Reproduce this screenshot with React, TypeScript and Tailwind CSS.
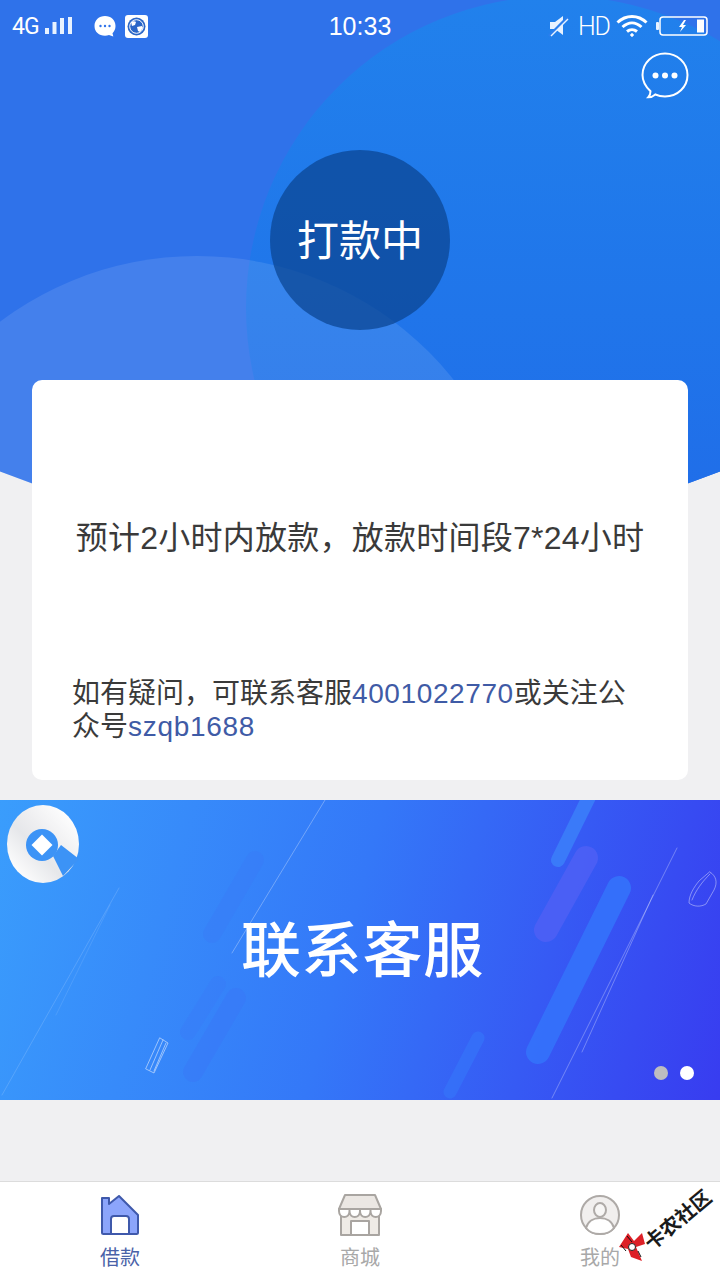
import React from 'react';

const cjk = "font-['Liberation_Sans','Noto_Sans_CJK_SC',sans-serif]";

function StatusBar() {
  return (
    <div className="relative grid grid-cols-3 items-center h-[52px] px-[12px] text-white">
      <div className="flex items-center">
        <span className="font-['Roboto',sans-serif] text-[23px] leading-none tracking-[-1px]">4G</span>
        <svg width="30" height="20" viewBox="0 0 30 20" className="ml-[6px]" fill="#e8f2ff">
          <rect x="0" y="12" width="4" height="6" />
          <rect x="7.500" y="6" width="4" height="12" />
          <rect x="15" y="2" width="4" height="16" />
          <rect x="23" y="1" width="4" height="17" />
        </svg>
        <svg width="24" height="26" viewBox="0 0 24 26" className="ml-[18px]">
          <path d="M12 3c6 0 10.500 4 10.500 10 0 3-1.200 5.500-3 7.200l.8 3.300-4.300-1.500c-1.300.5-2.600.7-4 .7C6 22.700 1.500 19 1.500 13S6 3 12 3z" fill="#fff" />
          <circle cx="7.500" cy="13" r="1.200" fill="#2f72ea" />
          <circle cx="12" cy="13" r="1.200" fill="#2f72ea" />
          <circle cx="16.500" cy="13" r="1.200" fill="#2f72ea" />
        </svg>
        <svg width="23" height="23" viewBox="0 0 23 23" className="ml-[8px]">
          <rect x="0" y="0" width="23" height="23" rx="3" fill="#fff" />
          <circle cx="11.500" cy="11.500" r="9" fill="#2a66c8" />
          <circle cx="11.500" cy="11.500" r="6.800" fill="none" stroke="#fff" strokeWidth="1" />
          <path d="M6 7c2-1 4-1 5 0l-1 3-3 1zM12 12l5-1 1 2-3 4-2-1z" fill="#fff" />
        </svg>
      </div>
      <div className="text-center font-['Liberation_Sans',sans-serif] text-[25px] font-normal leading-none">10:33</div>
      <div className="flex items-center justify-end">
        <svg width="22" height="22" viewBox="0 0 22 22">
          <path d="M2 7h5l8-6v19l-8-6H2z" fill="#e8f2ff" />
          <path d="M1 21L20 2" stroke="#2b7fee" strokeWidth="3" />
          <path d="M3 21L20 4" stroke="#e8f2ff" strokeWidth="1.500" />
        </svg>
        <span className="ml-[8px] font-['Roboto',sans-serif] text-[25px] font-light leading-none tracking-[-1px]">HD</span>
        <svg width="32" height="24" viewBox="0 0 32 24" className="ml-[6px]" fill="none" stroke="#fff" strokeWidth="3">
          <path d="M1.500 8.500C10 .5 22 .5 30.500 8.500" />
          <path d="M6.500 13c6-5.500 13-5.500 19 0" />
          <path d="M11 17.500c3-2.500 7-2.500 10 0" />
          <circle cx="16" cy="21" r="1.300" fill="#fff" strokeWidth="1" />
        </svg>
        <svg width="52" height="20" viewBox="0 0 52 20" className="ml-[8px]">
          <rect x="0" y="6" width="3" height="8" rx="1" fill="#e8f2ff" />
          <rect x="4" y="1" width="47" height="18" rx="3" fill="none" stroke="#fff" strokeWidth="1.500" />
          <rect x="41" y="3.500" width="7" height="13" fill="#fff" />
          <path d="M28 4l-5 7h3l-2 5 6-7h-3l3-5z" fill="#fff" />
        </svg>
      </div>
    </div>
  );
}

function ChatIcon() {
  return (
    <svg width="48" height="48" viewBox="0 0 48 48" fill="none">
      <path d="M24 1.500C36.500 1.500 46.500 11 46.500 23S36.500 44.500 24 44.500c-3.500 0-6.800-.7-9.700-2-2 1.800-4.500 2.800-7 2.800 1.500-1.600 2.200-3.700 2.200-6C5 35 1.500 29.500 1.500 23 1.500 11 11.500 1.500 24 1.500z" stroke="#fff" strokeWidth="2" />
      <circle cx="14.500" cy="23.500" r="3" fill="#fff" />
      <circle cx="24" cy="23.500" r="3" fill="#fff" />
      <circle cx="33.500" cy="23.500" r="3" fill="#fff" />
    </svg>
  );
}

function BannerArt() {
  return (
    <svg width="720" height="300" viewBox="0 800 720 300" fill="none" className="absolute inset-0" strokeLinecap="round">
      <path d="M255 860L212 934" stroke="#3a78f6" strokeOpacity="0.3" strokeWidth="18" />
      <path d="M218 984L188 1032" stroke="#3a72f6" strokeOpacity="0.25" strokeWidth="16" />
      <path d="M236 998L193 1072" stroke="#3a70f6" strokeOpacity="0.3" strokeWidth="20" />
      <path d="M590 795L558 860" stroke="#3b7dfa" strokeOpacity="0.9" strokeWidth="14" />
      <path d="M586 858L546 930" stroke="#4d5ff5" strokeOpacity="0.9" strokeWidth="24" />
      <path d="M619 888L538 1052" stroke="#3472fb" strokeOpacity="0.9" strokeWidth="24" />
      <path d="M478 1038L450 1092" stroke="#3570f8" strokeOpacity="0.9" strokeWidth="13" />
      <g stroke="#ffffff" strokeOpacity="0.3" strokeWidth="1">
        <path d="M325 800L232 953" />
        <path d="M677 848L552 1098" />
        <path d="M653 895L582 1052" />
        <path d="M119 888L2 1095" strokeOpacity="0.15" />
        <path d="M110 905L56 1015" strokeOpacity="0.1" />
      </g>
      {/* paper clip */}
      <g stroke="#ffffff" strokeOpacity="0.5" strokeWidth="1">
        <path d="M160 1038l8 5-14 30-8-4z" />
        <path d="M163 1040l-13 30M166 1043l-12 28" />
      </g>
      {/* feather */}
      <g stroke="#ffffff" strokeOpacity="0.4" strokeWidth="1">
        <path d="M710 872c6 4 8 10 4 18l-8 14c-5 3-12 3-17-1 0-8 5-16 10-22z" />
        <path d="M692 900c4-10 10-18 18-26" />
      </g>
    </svg>
  );
}

function BannerLogo() {
  return (
    <svg width="80" height="84" viewBox="0 0 80 84" className="absolute left-[4px] top-[2px]">
      <defs>
        <linearGradient id="lg" x1="0.1" y1="0.9" x2="0.9" y2="0.1">
          <stop offset="0" stopColor="#ffffff" />
          <stop offset="0.4" stopColor="#e6e7ea" />
          <stop offset="0.6" stopColor="#eeeef0" />
          <stop offset="1" stopColor="#ffffff" />
        </linearGradient>
      </defs>
      <ellipse cx="39" cy="42" rx="36" ry="39" fill="url(#lg)" />
      <path d="M49 54L59 74 75 57 57 43z" fill="#3c93f6" />
      <circle cx="38" cy="43" r="16" fill="#3c93f6" />
      <path d="M38 32.500l10.500 10.500-10.500 10.500-10.500-10.500z" fill="#fff" strokeLinejoin="round" />
    </svg>
  );
}

function HomeIcon() {
  return (
    <svg width="40" height="40" viewBox="0 0 40 40" strokeLinejoin="round">
      <path d="M2 17V3h7v6l10-8 19 19v17.500a1.500 1.500 0 0 1-1.500 1.500h-33A1.500 1.500 0 0 1 2 37.500z" fill="#8ca5fb" stroke="#3f59ab" strokeWidth="2" />
      <path d="M11 39V24a3 3 0 0 1 3-3h12a3 3 0 0 1 3 3v15z" fill="#fff" stroke="#3f59ab" strokeWidth="2" />
    </svg>
  );
}

function ShopIcon() {
  return (
    <svg width="44" height="42" viewBox="0 0 44 42" fill="none" stroke="#a9a5a1" strokeWidth="2" strokeLinejoin="round">
      <path d="M3 20v21h38V20" fill="#efebe6" />
      <path d="M13 41V27h18v14z" fill="#fff" />
      <path d="M7 1h30l6 14H1z" fill="#ebe7e3" />
      <path d="M1 15v2c0 8 10.500 8 10.500 0v-2 2c0 8 10.500 8 10.500 0v-2 2c0 8 10.500 8 10.500 0v-2 2c0 8 10.500 8 10.500 0v-2z" fill="#fff" />
    </svg>
  );
}

function UserIcon() {
  return (
    <svg width="40" height="40" viewBox="0 0 40 40" fill="none" stroke="#aeaaa7" strokeWidth="2">
      <circle cx="20" cy="20" r="19" fill="#f1efee" />
      <ellipse cx="20" cy="15" rx="6" ry="7" fill="#f7f6f5" />
      <path d="M6 33c2-7 8-10 14-10s12 3 14 10c-3 4-8 6-14 6s-11-2-14-6z" fill="#fff" />
    </svg>
  );
}

function Watermark() {
  return (
    <div className="absolute left-[618px] top-[1186px] w-[102px] h-[76px]">
      <svg width="30" height="32" viewBox="0 0 30 32" className="absolute left-0 bottom-0">
        <path d="M1 17L10 3l6 8 8-8 3 11-9 3 6 14-11-4-3-8z" fill="#dd2027" />
        <path d="M3 15l5 6M9 6l5 6M20 21l3 6" stroke="#111" strokeWidth="1" />
        <circle cx="14" cy="17" r="3.500" fill="#fff" stroke="#222" strokeWidth="1" />
      </svg>
      <span className={`absolute left-[20px] top-[24px] -rotate-[40deg] whitespace-nowrap text-[20px] font-bold leading-none text-[#1a1a1a] ${cjk}`}>
        卡农社区
      </span>
    </div>
  );
}

export default function App() {
  const tabs = [
    { label: '借款', icon: <HomeIcon />, color: 'text-[#4a62a8]' },
    { label: '商城', icon: <ShopIcon />, color: 'text-[#a8a8a8]' },
    { label: '我的', icon: <UserIcon />, color: 'text-[#a8a8a8]' },
  ];

  return (
    <div className={`relative flex flex-col w-[720px] h-[1280px] overflow-hidden bg-[#f0f0f2] ${cjk}`}>
      {/* background shapes */}
      <div className="absolute left-[-620px] top-[-1420px] w-[1960px] h-[1960px] rounded-full overflow-hidden bg-[#2f72ea]">
        <div className="absolute left-[866px] top-[1416px] w-[624px] h-[624px] rounded-full bg-gradient-to-b from-[#2181ec] to-[#2069e8]" />
        <div className="absolute left-[489px] top-[1676px] w-[656px] h-[656px] rounded-full bg-white/10" />
      </div>

      <div className="relative flex flex-col flex-1">
        <StatusBar />
        <div className="flex justify-end pr-[31px]">
          <ChatIcon />
        </div>
        <div className="flex justify-center mt-[50px]">
          <div className="flex items-center justify-center w-[180px] h-[180px] pt-[3px] rounded-full bg-[#0a4490]/[0.72] text-white text-[42px] font-normal">
            打款中
          </div>
        </div>

        <div className="flex flex-col h-[400px] mx-[32px] mt-[50px] pt-[138px] pb-[37px] px-[40px] rounded-[10px] bg-white">
          <p className="text-center whitespace-nowrap text-[#3a3a3a] text-[32px] leading-[40px] tracking-[0.25px] -mx-[20px]">
            预计2小时内放款，放款时间段7*24小时
          </p>
          <p className="mt-auto text-[#3a3a3a] text-[28px] leading-[33px]">
            如有疑问，可联系客服<span className="text-[#3f5ba6] tracking-[0.6px]">4001022770</span>或关注公众号
            <span className="text-[#3f5ba6] tracking-[0.7px]">szqb1688</span>
          </p>
        </div>

        <div className="relative flex items-center justify-center h-[300px] mt-[20px] bg-[linear-gradient(105deg,#3a9dfc_0%,#3478f8_48%,#383cf0_100%)]">
          <BannerArt />
          <BannerLogo />
          <span className="relative text-white text-[60px] font-medium leading-none ml-[5px] mt-[4px] tracking-[0.7px]">联系客服</span>
          <div className="absolute right-[26px] bottom-[20px] flex gap-[12px]">
            <span className="w-[14px] h-[14px] rounded-full bg-[#bdbdc0]" />
            <span className="w-[14px] h-[14px] rounded-full bg-white" />
          </div>
        </div>

        <div className="mt-auto grid grid-cols-3 h-[99px] border-t border-[#dcdcdc] bg-white">
          {tabs.map((t) => (
            <div key={t.label} className="flex flex-col items-center pt-[12px]">
              <div className="flex items-center justify-center h-[42px]">{t.icon}</div>
              <span className={`mt-[9px] text-[20px] leading-[26px] ${t.color}`}>{t.label}</span>
            </div>
          ))}
        </div>
      </div>

      <Watermark />
    </div>
  );
}
